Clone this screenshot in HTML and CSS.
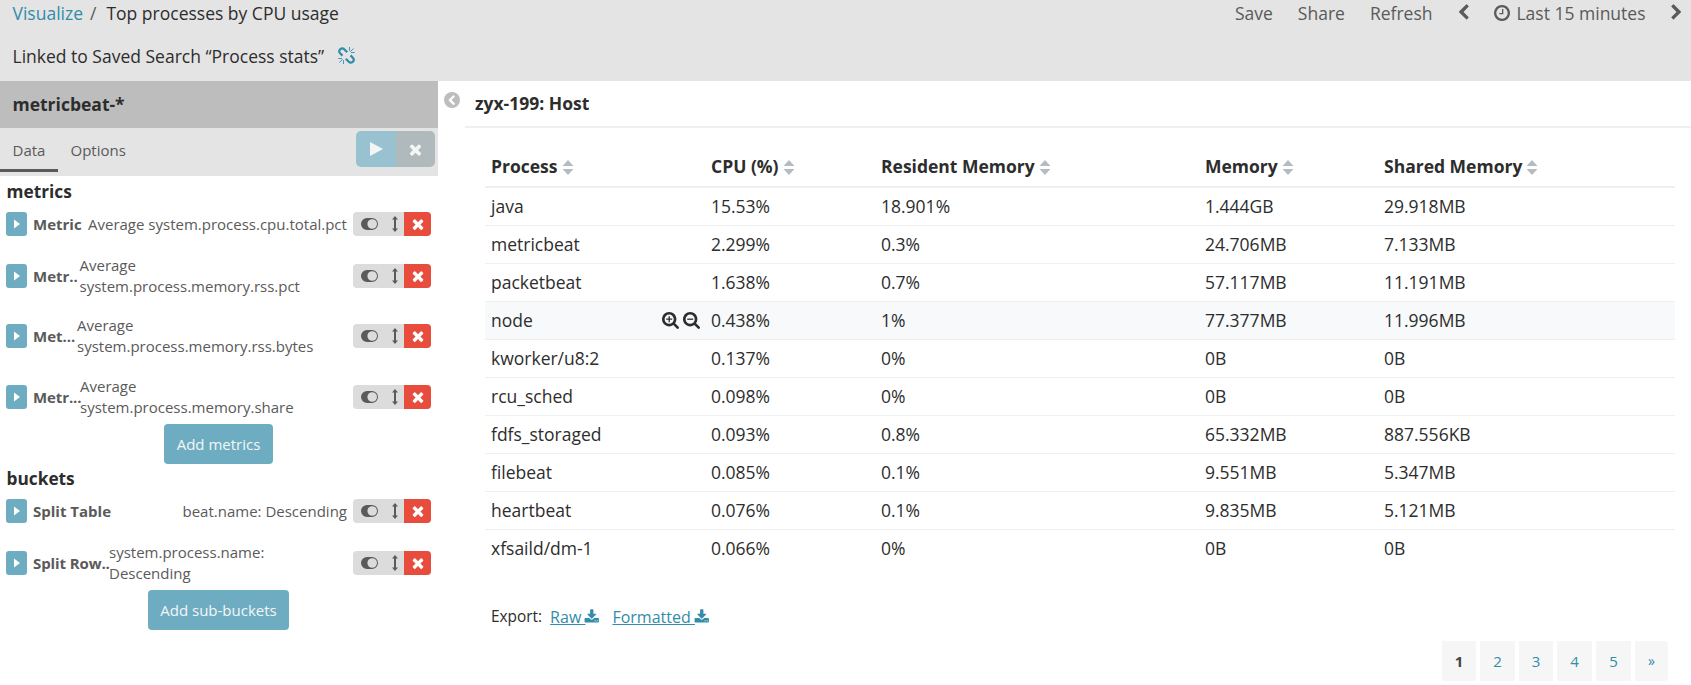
FILE: index.html
```html
<!DOCTYPE html>
<html lang="en">
<head>
<meta charset="utf-8">
<title>Top processes by CPU usage</title>
<link rel="stylesheet" href="styles.css">
</head>
<body>
<svg class="defs" width="0" height="0">
  <symbol id="i-x" viewBox="0 0 1792 1792"><path d="M1490 1322q0 40-28 68l-136 136q-28 28-68 28t-68-28l-294-294-294 294q-28 28-68 28t-68-28l-136-136q-28-28-28-68t28-68l294-294-294-294q-28-28-28-68t28-68l136-136q28-28 68-28t68 28l294 294 294-294q28-28 68-28t68 28l136 136q28 28 28 68t-28 68l-294 294 294 294q28 28 28 68z"/></symbol>
  <symbol id="i-dl" viewBox="0 0 1792 1792"><path d="M1344 1344q0-26-19-45t-45-19-45 19-19 45 19 45 45 19 45-19 19-45zm256 0q0-26-19-45t-45-19-45 19-19 45 19 45 45 19 45-19 19-45zm128-224v320q0 40-28 68t-68 28h-1472q-40 0-68-28t-28-68v-320q0-40 28-68t68-28h465l135 136q58 56 136 56t136-56l136-136h464q40 0 68 28t28 68zm-325-569q17 41-14 70l-448 448q-18 19-45 19t-45-19l-448-448q-31-29-14-70 17-39 59-39h256v-448q0-26 19-45t45-19h256q26 0 45 19t19 45v448h256q42 0 59 39z"/></symbol>
  <symbol id="i-zoom" viewBox="0 0 1664 1664"><path fill-rule="evenodd" d="M1152 704q0-185-131.500-316.500t-316.500-131.500-316.500 131.500-131.500 316.500 131.500 316.500 316.500 131.500 316.500-131.500 131.500-316.500zm512 832q0 53-37.500 90.500t-90.500 37.500q-54 0-90-38l-343-342q-179 124-399 124-143 0-273.500-55.500t-225-150-150-225-55.500-273.500 55.500-273.500 150-225 225-150 273.500-55.500 273.500 55.500 225 150 150 225 55.500 273.500q0 220-124 399l343 343q37 37 37 90z"/></symbol>
  <symbol id="i-left" viewBox="0 0 1792 1792"><path d="M1427 301l-531 531 531 531q19 19 19 45t-19 45l-166 166q-19 19-45 19t-45-19l-742-742q-19-19-19-45t19-45l742-742q19-19 45-19t45 19l166 166q19 19 19 45t-19 45z"/></symbol>
  <symbol id="i-clock" viewBox="128 128 1536 1536"><path d="M1024 544v448q0 14-9 23t-23 9h-320q-14 0-23-9t-9-23v-64q0-14 9-23t23-9h224v-352q0-14 9-23t23-9h64q14 0 23 9t9 23zm416 352q0-148-73-273t-198-198-273-73-273 73-198 198-73 273 73 273 198 198 273 73 273-73 198-198 73-273zm224 0q0 209-103 385.500t-279.500 279.500-385.500 103-385.500-103-279.500-279.500-103-385.500 103-385.500 279.500-279.500 385.500-103 385.500 103 279.500 279.500 103 385.500z"/></symbol>
  <symbol id="i-unlink" viewBox="0 0 17 17"><g fill="none" stroke="currentColor" stroke-width="2.3"><path d="M4.500 8.600 1.900 6C.9 4.800 1.100 3 2.300 2.100s2.800-.9 3.900.2L9.200 5.300"/><path d="M12.500 8.400 15.100 11c1 1.200.8 3-.4 3.900s-2.800.9-3.900-.2L7.800 11.700"/></g><g stroke="currentColor" stroke-width=".9"><path d="M11.500 0v3.800M16.800 5.500H13M15.600 1.500 12.300 4.700M5.500 17v-3.800M.2 11.500H4M1.400 15.500l3.300-3.200"/></g></symbol>
  <symbol id="i-caret" viewBox="0 0 6 10"><path d="M0 .5v9L6 5z"/></symbol>
  <symbol id="i-play" viewBox="0 0 13 14"><path d="M0 0v14L13 7z"/></symbol>
  <symbol id="i-toggle" viewBox="0 0 17 12"><path fill-rule="evenodd" d="M6 0h5a6 6 0 0 1 0 12H6A6 6 0 0 1 6 0zM11.200 1.200a4.800 4.800 0 1 0 0 9.600 4.800 4.800 0 0 0 0-9.600z"/></symbol>
  <symbol id="i-updown" viewBox="0 0 6 16"><path d="M3 0 6 3.500H4v9h2L3 16 0 12.500h2v-9H0z"/></symbol>
  <symbol id="i-sort" viewBox="0 0 12 15"><path d="M6 0 11.500 6H.5zM.5 9h11L6 15z"/></symbol>
</svg>
<header class="top">
  <div class="nav">
    <div class="crumbs"><a class="blue">Visualize</a><span class="slash">/</span><span>Top processes by CPU usage</span></div>
    <div class="menu">
      <a>Save</a><a>Share</a><a>Refresh</a>
      <svg class="chev prev"><use href="#i-left"/></svg>
      <a class="time"><svg class="clock"><use href="#i-clock"/></svg>Last 15 minutes</a>
      <svg class="chev next"><use href="#i-left"/></svg>
    </div>
  </div>
  <div class="linked">Linked to Saved Search “Process stats”<svg class="unlink"><use href="#i-unlink"/></svg></div>
</header>
<div class="body">
  <aside class="side">
    <div class="pattern">metricbeat-*</div>
    <div class="tabs">
      <a class="tab active">Data</a><a class="tab">Options</a>
      <div class="actions"><span class="play"><svg><use href="#i-play"/></svg></span><span class="discard"><svg><use href="#i-x"/></svg></span></div>
    </div>
    <h2 class="group">metrics</h2>
    <div class="agg"><span class="open"><svg><use href="#i-caret"/></svg></span><b class="w-metric">Metric</b><span class="desc">Average system.process.cpu.total.pct</span><span class="ctl"><svg class="tg"><use href="#i-toggle"/></svg><svg class="ud"><use href="#i-updown"/></svg><span class="rm"><svg><use href="#i-x"/></svg></span></span></div>
    <div class="agg two"><span class="open"><svg><use href="#i-caret"/></svg></span><b class="w-a">Metr..</b><span class="desc">Average<br>system.process.memory.rss.pct</span><span class="ctl"><svg class="tg"><use href="#i-toggle"/></svg><svg class="ud"><use href="#i-updown"/></svg><span class="rm"><svg><use href="#i-x"/></svg></span></span></div>
    <div class="agg two mid"><span class="open"><svg><use href="#i-caret"/></svg></span><b class="w-b">Met...</b><span class="desc">Average<br>system.process.memory.rss.bytes</span><span class="ctl"><svg class="tg"><use href="#i-toggle"/></svg><svg class="ud"><use href="#i-updown"/></svg><span class="rm"><svg><use href="#i-x"/></svg></span></span></div>
    <div class="agg two"><span class="open"><svg><use href="#i-caret"/></svg></span><b class="w-c">Metr...</b><span class="desc">Average<br>system.process.memory.share</span><span class="ctl"><svg class="tg"><use href="#i-toggle"/></svg><svg class="ud"><use href="#i-updown"/></svg><span class="rm"><svg><use href="#i-x"/></svg></span></span></div>
    <button class="add add-m">Add metrics</button>
    <h2 class="group second">buckets</h2>
    <div class="agg"><span class="open"><svg><use href="#i-caret"/></svg></span><b>Split Table</b><span class="desc right">beat.name: Descending</span><span class="ctl"><svg class="tg"><use href="#i-toggle"/></svg><svg class="ud"><use href="#i-updown"/></svg><span class="rm"><svg><use href="#i-x"/></svg></span></span></div>
    <div class="agg two"><span class="open"><svg><use href="#i-caret"/></svg></span><b class="w-d">Split Row..</b><span class="desc">system.process.name:<br>Descending</span><span class="ctl"><svg class="tg"><use href="#i-toggle"/></svg><svg class="ud"><use href="#i-updown"/></svg><span class="rm"><svg><use href="#i-x"/></svg></span></span></div>
    <button class="add add-b">Add sub-buckets</button>
  </aside>
  <div class="gutter"><span class="collapse"><svg><use href="#i-left"/></svg></span></div>
  <main class="main">
    <h1 class="title">zyx-199: Host</h1>
    <table class="grid">
      <colgroup><col class="c1"><col class="c2"><col class="c3"><col class="c4"><col></colgroup>
      <thead><tr><th>Process<svg class="sort"><use href="#i-sort"/></svg></th><th>CPU (%)<svg class="sort"><use href="#i-sort"/></svg></th><th>Resident Memory<svg class="sort"><use href="#i-sort"/></svg></th><th>Memory<svg class="sort"><use href="#i-sort"/></svg></th><th>Shared Memory<svg class="sort"><use href="#i-sort"/></svg></th></tr></thead>
      <tbody>
        <tr><td>java</td><td>15.53%</td><td>18.901%</td><td>1.444GB</td><td>29.918MB</td></tr>
        <tr><td>metricbeat</td><td>2.299%</td><td>0.3%</td><td>24.706MB</td><td>7.133MB</td></tr>
        <tr><td>packetbeat</td><td>1.638%</td><td>0.7%</td><td>57.117MB</td><td>11.191MB</td></tr>
        <tr class="hover"><td><div class="cell">node<span class="zooms"><svg viewBox="0 0 17 17"><use href="#i-zoom" width="17" height="17"/><path d="M7.200 4.200v6M4.200 7.200h6" stroke="currentColor" stroke-width="1.300"/></svg><svg viewBox="0 0 17 17"><use href="#i-zoom" width="17" height="17"/><path d="M4.200 7.200h6" stroke="currentColor" stroke-width="1.300"/></svg></span></div></td><td>0.438%</td><td>1%</td><td>77.377MB</td><td>11.996MB</td></tr>
        <tr><td>kworker/u8:2</td><td>0.137%</td><td>0%</td><td>0B</td><td>0B</td></tr>
        <tr><td>rcu_sched</td><td>0.098%</td><td>0%</td><td>0B</td><td>0B</td></tr>
        <tr><td>fdfs_storaged</td><td>0.093%</td><td>0.8%</td><td>65.332MB</td><td>887.556KB</td></tr>
        <tr><td>filebeat</td><td>0.085%</td><td>0.1%</td><td>9.551MB</td><td>5.347MB</td></tr>
        <tr><td>heartbeat</td><td>0.076%</td><td>0.1%</td><td>9.835MB</td><td>5.121MB</td></tr>
        <tr><td>xfsaild/dm-1</td><td>0.066%</td><td>0%</td><td>0B</td><td>0B</td></tr>
      </tbody>
    </table>
    <div class="export"><span class="lbl">Export:</span><a class="raw">Raw <svg><use href="#i-dl"/></svg></a><a>Formatted <svg><use href="#i-dl"/></svg></a></div>
    <div class="pages"><span class="pg cur">1</span><span class="pg">2</span><span class="pg">3</span><span class="pg">4</span><span class="pg">5</span><span class="pg last">»</span></div>
  </main>
</div>
</body>
</html>
```
FILE: styles.css
```css
* { box-sizing: border-box; }
body { margin: 0; background: #fff; color: #2d2d2d; font-family: "Open Sans", sans-serif; font-size: 17.500px; width: 1691px; height: 685px; overflow: hidden; }
svg { fill: currentColor; display: block; flex: none; }
.defs { position: absolute; }
.top { height: 81px; background: #e4e4e4; padding: 0 0 0 12.500px; }
.nav { display: flex; justify-content: space-between; height: 26px; line-height: 26px; }
.crumbs, .menu { display: flex; }
.blue { color: #328caa; }
.slash { margin: 0 10px 0 7px; color: #5a5a5a; }
.menu { color: #5a5a5a; padding-right: 9px; }
.menu a { margin-right: 25px; }
.menu .time { display: flex; margin: 0 22.500px 0 22px; }
.clock { width: 16px; height: 16px; margin: 5px 6px 0 0; }
.chev { width: 17px; height: 17px; margin-top: 4px; }
.prev { margin-left: -2px; }
.next { transform: scaleX(-1); margin-right: -3px; }
.linked { display: flex; line-height: 26px; margin-top: 17px; }
.unlink { width: 17px; height: 17px; margin: 4px 0 0 14px; color: #328caa; }
.body { display: flex; }
.side { width: 438px; }
.pattern { height: 47px; line-height: 47px; background: #bdbdbd; padding-left: 12.500px; font-weight: 700; font-size: 17.500px; }
.tabs { height: 48px; display: flex; background: #e4e4e4; font-size: 15px; color: #5a5a5a; line-height: 44px; }
.tab { height: 44px; padding: 0 12.500px; }
.active { border-bottom: 3px solid #5a5a5a; width: 58px; padding-right: 0; }
.actions { display: flex; margin: 3px 3px 0 auto; width: 79px; height: 36px; border-radius: 5px; overflow: hidden; color: #f4f6f6; }
.play, .discard { width: 40px; display: flex; align-items: center; justify-content: center; background: #99c2d0; }
.discard { width: 39px; background: #b0babc; }
.play svg { width: 13px; height: 14px; }
.discard svg { width: 17px; height: 17px; }
.group { margin: 0; padding: 4px 0 0 6.500px; height: 36px; font-size: 17.300px; line-height: 24px; font-weight: 700; }
.second { height: 35px; padding-top: 3px; }
.agg { display: flex; align-items: center; height: 24px; padding: 0 7px 0 6px; font-size: 15px; line-height: 21px; color: #5a5a5a; }
.agg:not(.two) { line-height: 20px; }
.two { height: 42px; margin-top: 19px; }
.two.mid { margin-top: 18px; }
.agg b { white-space: nowrap; }
.open { width: 21px; height: 24px; background: #6eadc1; border-radius: 3px; margin-right: 6px; display: flex; align-items: center; justify-content: center; color: #fff; flex: none; }
.open svg { width: 6px; height: 10px; }
.w-metric { width: 55px; }
.w-a { width: 46.500px; }
.w-b { width: 44px; }
.w-c { width: 47px; }
.w-d { width: 76px; }
.w-c, .w-d { letter-spacing: -.1px; }
.desc { white-space: nowrap; }
.right { margin-left: auto; margin-right: 6px; }
.ctl { display: flex; align-items: center; width: 78px; height: 24px; background: #dcdcdc; border-radius: 4px; overflow: hidden; margin-left: auto; }
.right + .ctl { margin-left: 0; }
.tg { width: 17px; height: 12px; margin-left: 8px; }
.ud { width: 6px; height: 16px; margin-left: 14px; }
.rm { width: 27px; height: 24px; background: #e74c3c; color: #fff; margin-left: auto; display: flex; align-items: center; justify-content: center; }
.rm svg { width: 16px; height: 16px; }
.add { display: block; border: 0; padding: 0; height: 40px; background: #6eadc1; color: #f4f6f6; border-radius: 4px; font: 15px "Open Sans", sans-serif; }
.add-m { width: 109px; margin: 6px 0 0 164px; }
.add-b { width: 141px; margin: 6px 0 0 148px; }
.gutter { width: 27px; padding: 11px 0 0 6px; }
.collapse { width: 16px; height: 16px; border-radius: 50%; background: #bdbdbd; color: #fff; display: flex; align-items: center; justify-content: center; }
.collapse svg { width: 11px; height: 11px; margin-right: 1px; }
.main { flex: 1; }
.title { margin: 0; height: 47px; line-height: 45px; padding-left: 10px; font-size: 17.500px; font-weight: 700; border-bottom: 2px solid #ecf0f1; }
.grid { table-layout: fixed; border-collapse: separate; border-spacing: 0; width: 1190px; margin: 18px 0 0 20px; }
.c1 { width: 220px; }
.c2 { width: 170px; }
.c3 { width: 324px; }
.c4 { width: 179px; }
th, td { padding: 0 6px; text-align: left; line-height: 24px; }
th { height: 42px; border-bottom: 2px solid #ecf0f1; font-weight: 700; font-size: 17.500px; }
td { height: 38px; padding-bottom: 1px; border-bottom: 1px solid #ecf0f1; }
tbody tr:last-child td { border-bottom: 0; padding-bottom: 2px; }
.sort { display: inline-block; width: 12px; height: 15px; margin-left: 4px; vertical-align: -2px; color: #b4bcc2; }
.hover td { background: #f7f9fa; }
.cell { display: flex; justify-content: space-between; align-items: center; }
.zooms { display: flex; gap: 4px; margin-right: -1px; }
.zooms svg { width: 17px; height: 17px; }
.export { display: flex; height: 24px; line-height: 24px; font-size: 16px; margin: 37px 0 0 26px; }
.lbl { margin-right: 8px; font-size: 15.400px; }
.export a { color: #328caa; text-decoration: underline; margin-right: 12.500px; white-space: nowrap; }
.export svg { display: inline-block; width: 15.500px; height: 16px; vertical-align: -2px; margin-left: -1px; }
.pages { display: flex; gap: 4px; justify-content: flex-end; margin: 12px 23px 0 0; }
.pg { width: 35px; height: 40px; line-height: 40px; text-align: center; background: #f6f6f6; color: #328caa; font-size: 15px; }
.cur { font-weight: 700; color: #444; }
.cur, .pg:nth-child(3) { width: 34px; }
.last { width: 33px; border-radius: 0 4px 4px 0; font-size: 14px; }
```
